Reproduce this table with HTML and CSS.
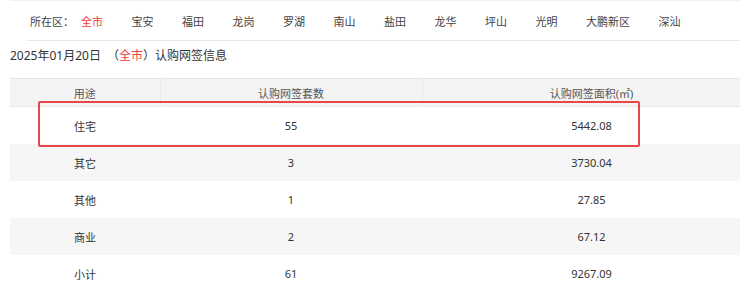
FILE: index.html
```html
<!DOCTYPE html>
<html lang="zh-CN">
<head>
<meta charset="utf-8">
<title>认购网签信息</title>
<link rel="stylesheet" href="styles.css">
</head>
<body>
<div class="page">
  <div class="filter">
    <div class="filter-row">
      <span class="filter-label">所在区：</span>
      <a class="filter-item active">全市</a>
      <a class="filter-item">宝安</a>
      <a class="filter-item">福田</a>
      <a class="filter-item">龙岗</a>
      <a class="filter-item">罗湖</a>
      <a class="filter-item">南山</a>
      <a class="filter-item">盐田</a>
      <a class="filter-item">龙华</a>
      <a class="filter-item">坪山</a>
      <a class="filter-item">光明</a>
      <a class="filter-item">大鹏新区</a>
      <a class="filter-item">深汕</a>
    </div>
  </div>
  <h2 class="title">2025年01月20日 <span class="scope">（<span class="red">全市</span>）</span>认购网签信息</h2>
  <div class="table-wrap">
    <table class="data">
      <colgroup>
        <col class="c1"><col class="c2"><col class="c3">
      </colgroup>
      <thead>
        <tr><th>用途</th><th>认购网签套数</th><th>认购网签面积(㎡)</th></tr>
      </thead>
      <tbody>
        <tr><td>住宅</td><td>55</td><td>5442.08</td></tr>
        <tr><td>其它</td><td>3</td><td>3730.04</td></tr>
        <tr><td>其他</td><td>1</td><td>27.85</td></tr>
        <tr><td>商业</td><td>2</td><td>67.12</td></tr>
        <tr><td>小计</td><td>61</td><td>9267.09</td></tr>
      </tbody>
    </table>
    <div class="highlight"></div>
  </div>
</div>
</body>
</html>
```

FILE: styles.css
```css
html, body {
  margin: 0;
  padding: 0;
  background: #fff;
  overflow: hidden;
}
body {
  font-family: "Noto Sans", "Noto Sans CJK SC", sans-serif;
  color: #333;
  width: 740px;
}
.page {
  width: 740px;
}
.filter {
  margin-left: 10px;
  border-top: 1px solid #f0f0f0;
}
.filter-row {
  margin-left: 17px;
  height: 39px;
  border-bottom: 1px solid #e6e6e6;
  display: flex;
  align-items: center;
  padding-left: 3px;
  font-size: 11px;
  color: #444;
}
.filter-label {
  margin-right: 7px;
}
.filter-item {
  margin-right: 28.5px;
  color: #444;
  cursor: pointer;
}
.filter-item.active {
  color: #f03c3c;
}
.title {
  margin: 5px 0 12px 10px;
  font-size: 12px;
  font-weight: normal;
  line-height: 20px;
  color: #333;
}
.scope {
  margin-left: 3px;
}
.red {
  color: #f03c3c;
}
.table-wrap {
  position: relative;
  margin-left: 10px;
  width: 751px;
}
.data {
  width: 751px;
  border-collapse: collapse;
  table-layout: fixed;
  font-size: 11px;
}
.c1 { width: 150px; }
.c2 { width: 262px; }
.c3 { width: 339px; }
.data th {
  height: 27px;
  padding: 0;
  background: #f4f4f4;
  border-top: 1px solid #e8e8e8;
  border-bottom: 1px solid #e8e8e8;
  border-right: 1px solid #eaeaea;
  font-weight: normal;
  color: #555;
  text-align: center;
}
.data td {
  height: 37px;
  padding: 0;
  text-align: center;
  color: #333;
}
.data tbody tr:nth-child(even) td {
  background: #f6f6f6;
}
.highlight {
  position: absolute;
  left: 28px;
  top: 23px;
  width: 598px;
  height: 42px;
  border: 2px solid #e8474a;
  border-radius: 2px;
}
```
